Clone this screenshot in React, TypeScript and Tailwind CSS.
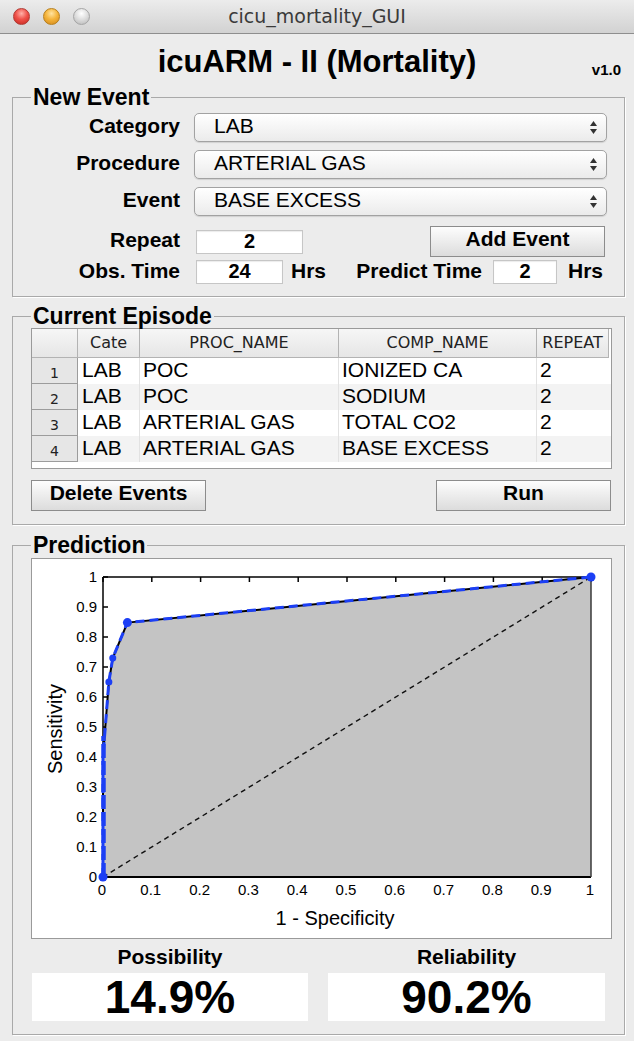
import React from "react";

const X0 = 71;
const W = 488;
const Y0 = 318;
const H = 300;
const fx = (v: number) => X0 + W * v;
const fy = (v: number) => Y0 - H * v;

const curve: [number, number][] = [
  [0, 0],
  [0, 0.1],
  [0, 0.2],
  [0, 0.3],
  [0, 0.4],
  [0.003, 0.465],
  [0.012, 0.65],
  [0.02, 0.73],
  [0.05, 0.848],
  [1, 1],
];

const curveD = curve.map(([x, y], i) => `${i ? "L" : "M"}${fx(x)} ${fy(y)}`).join(" ");
const fillD = `${curveD} L${fx(1)} ${fy(0)} Z`;
const ticks = Array.from({ length: 11 }, (_, i) => i / 10);
const lbl = (v: number) => (v === 0 ? "0" : v === 1 ? "1" : v.toFixed(1));

function Chart() {
  const font = "Liberation Sans, Arial, sans-serif";
  return (
    <svg width="579" height="379" viewBox="0 0 579 379">
      {ticks.map((v) => (
        <g key={v}>
          <line x1={fx(v)} y1={fy(1)} x2={fx(v)} y2={fy(1) + 5} stroke="#000" strokeWidth="1.5" />
          <line x1={fx(0)} y1={fy(v)} x2={fx(0) + 5} y2={fy(v)} stroke="#000" strokeWidth="1.5" />
        </g>
      ))}
      <path d={fillD} fill="#c4c4c4" />
      <line x1={fx(0)} y1={fy(0)} x2={fx(1)} y2={fy(1)} stroke="#111" strokeWidth="1.4" strokeDasharray="5 4" />
      <line x1={fx(0)} y1={fy(1)} x2={fx(1)} y2={fy(1)} stroke="#000" strokeWidth="1.5" />
      <line x1={fx(0)} y1={fy(0)} x2={fx(1)} y2={fy(0)} stroke="#000" strokeWidth="1.8" />
      <line x1={fx(0)} y1={fy(0)} x2={fx(0)} y2={fy(1)} stroke="#000" strokeWidth="1.5" />
      <line x1={fx(1)} y1={fy(0)} x2={fx(1)} y2={fy(1)} stroke="#3a3a3a" strokeWidth="1.5" />
      <path d={curveD} fill="none" stroke="#000" strokeWidth="2" />
      <path d={curveD} fill="none" stroke="#1c3ff5" strokeWidth="3" strokeDasharray="9 5" />
      <line x1={fx(0) + 0.5} y1={fy(0)} x2={fx(0) + 0.5} y2={fy(0.47)} stroke="#1c3ff5" strokeWidth="4.5" strokeDasharray="14 3" />
      <circle cx={fx(0)} cy={fy(0)} r="4.5" fill="#1c3ff5" />
      <circle cx={fx(0.012)} cy={fy(0.65)} r="3.5" fill="#1c3ff5" />
      <circle cx={fx(0.02)} cy={fy(0.73)} r="3.5" fill="#1c3ff5" />
      <circle cx={fx(0.05)} cy={fy(0.848)} r="4.5" fill="#1c3ff5" />
      <circle cx={fx(1)} cy={fy(1)} r="4.5" fill="#1c3ff5" />
      {ticks.map((v) => (
        <text key={`y${v}`} x="65" y={fy(v) + 5} textAnchor="end" fontSize="15" fontFamily={font} fill="#000">
          {lbl(v)}
        </text>
      ))}
      {ticks.map((v) => (
        <text key={`x${v}`} x={fx(v) - 1} y="336" textAnchor="middle" fontSize="15" fontFamily={font} fill="#000">
          {lbl(v)}
        </text>
      ))}
      <text x="303" y="366" textAnchor="middle" fontSize="20" fontFamily={font} fill="#000">
        1 - Specificity
      </text>
      <text transform="translate(30,170) rotate(-90)" textAnchor="middle" fontSize="20" fontFamily={font} fill="#000">
        Sensitivity
      </text>
    </svg>
  );
}

function Arrows() {
  return (
    <svg width="9" height="15" viewBox="0 0 9 15">
      <path d="M4.5 1 L8 6 H1 Z" fill="#333" />
      <path d="M4.5 14 L8 9 H1 Z" fill="#333" />
    </svg>
  );
}

function Select({ value }: { value: string }) {
  return (
    <div className="ml-[14px] flex h-[29px] w-[413px] items-center justify-between rounded-[5px] border border-[#a2a2a2] bg-linear-to-b from-white to-[#ebebeb] pl-[19px] pr-[8px] shadow-[0_1px_1px_rgba(0,0,0,0.12)]">
      <span className="pb-[4px] text-[21px] leading-none text-black">{value}</span>
      <Arrows />
    </div>
  );
}

function Label({ children }: { children: React.ReactNode }) {
  return <div className="w-[167px] shrink-0 pb-[4px] text-right text-[21px] font-bold leading-none text-black">{children}</div>;
}

function Btn({ children, className }: { children: React.ReactNode; className: string }) {
  return (
    <div
      className={`flex h-[31px] w-[175px] shrink-0 items-center justify-center border border-[#8c8c8c] bg-linear-to-b from-[#fdfdfd] to-[#dcdcdc] pb-[6px] text-[21px] font-bold leading-none text-black ${className}`}
    >
      {children}
    </div>
  );
}

function Field({ value, className }: { value: string; className: string }) {
  return (
    <div
      className={`flex h-[24px] shrink-0 items-center justify-center border border-[#c6c6c6] bg-white pb-[2px] text-[20px] font-bold leading-none text-black shadow-[inset_0_1px_1px_rgba(0,0,0,0.08)] ${className}`}
    >
      {value}
    </div>
  );
}

const rows = [
  ["LAB", "POC", "IONIZED CA", "2"],
  ["LAB", "POC", "SODIUM", "2"],
  ["LAB", "ARTERIAL GAS", "TOTAL CO2", "2"],
  ["LAB", "ARTERIAL GAS", "BASE EXCESS", "2"],
];

const fieldset = "ml-[12px] w-[613px] border border-[#a9a9a9] shadow-[1px_1px_0_#ffffff]";
const legend = "ml-[18px] px-[2px] text-[23px] font-bold leading-[24px] text-black";

export default function App() {
  return (
    <div className="flex h-[1041px] w-[634px] flex-col overflow-hidden bg-[#ececec] font-['Liberation_Sans',Arial,sans-serif] text-black">
      {/* Title bar */}
      <div className="grid h-[34px] shrink-0 grid-cols-[1fr_auto_1fr] items-center border-b border-[#8e8e8e] bg-linear-to-b from-[#ececec] to-[#d2d2d2]">
        <div className="flex items-center gap-[13px] pl-[13px]">
          <div className="h-[17px] w-[17px] rounded-full border border-[#b03a33] bg-[radial-gradient(circle_at_50%_30%,#ffb1a8_0%,#f0524a_45%,#c3241c_100%)]" />
          <div className="h-[17px] w-[17px] rounded-full border border-[#b77f1c] bg-[radial-gradient(circle_at_50%_30%,#ffe3a0_0%,#f5b53c_45%,#d1861a_100%)]" />
          <div className="h-[17px] w-[17px] rounded-full border border-[#a5a5a5] bg-[radial-gradient(circle_at_50%_30%,#ffffff_0%,#dcdcdc_50%,#b5b5b5_100%)]" />
        </div>
        <div className="font-['DejaVu_Sans',sans-serif] text-[19px] leading-none text-[#3a3a3a]">cicu_mortality_GUI</div>
        <div />
      </div>

      {/* Header */}
      <div className="grid h-[51px] shrink-0 grid-cols-[1fr_auto_1fr]">
        <div />
        <div className="pt-[10px] text-[31px] font-bold leading-[36px]">icuARM - II (Mortality)</div>
        <div className="justify-self-end pr-[13px] pt-[27px] text-[15px] font-bold leading-[18px]">v1.0</div>
      </div>

      {/* New Event */}
      <fieldset className={`${fieldset} pb-[11px]`}>
        <legend className={legend}>New Event</legend>
        <div className="mt-[4px] flex h-[29px] items-center">
          <Label>Category</Label>
          <Select value="LAB" />
        </div>
        <div className="mt-[8px] flex h-[29px] items-center">
          <Label>Procedure</Label>
          <Select value="ARTERIAL GAS" />
        </div>
        <div className="mt-[8px] flex h-[29px] items-center">
          <Label>Event</Label>
          <Select value="BASE EXCESS" />
        </div>
        <div className="mt-[10px] flex h-[31px] items-center">
          <Label>Repeat</Label>
          <Field value="2" className="ml-[16px] w-[107px]" />
          <Btn className="ml-[127px]">Add Event</Btn>
        </div>
        <div className="mt-[2px] flex h-[26px] items-center">
          <Label>Obs. Time</Label>
          <Field value="24" className="ml-[16px] w-[87px]" />
          <div className="ml-[8px] w-[63px] shrink-0 pb-[4px] text-[21px] font-bold leading-none">Hrs</div>
          <div className="w-[128px] shrink-0 whitespace-nowrap pb-[4px] text-right text-[21px] font-bold leading-none">Predict Time</div>
          <Field value="2" className="ml-[11px] w-[64px]" />
          <div className="ml-[11px] pb-[4px] text-[21px] font-bold leading-none">Hrs</div>
        </div>
      </fieldset>

      {/* Current Episode */}
      <fieldset className={`${fieldset} mt-[7px] pb-[13px]`}>
        <legend className={legend}>Current Episode</legend>
        <div className="ml-[18px] h-[141px] w-[581px] border border-[#9a9a9a] bg-white">
          <div className="grid h-[29px] grid-cols-[46px_62px_199px_198px_72px] font-['DejaVu_Sans',sans-serif] text-[16px] leading-none text-[#222]">
            <div className="border-b border-r border-[#b3b3b3] bg-linear-to-b from-[#f6f6f6] to-[#e6e6e6]" />
            {["Cate", "PROC_NAME", "COMP_NAME", "REPEAT"].map((h) => (
              <div key={h} className="flex items-center justify-center border-b border-r border-[#b3b3b3] bg-linear-to-b from-[#f6f6f6] to-[#e6e6e6]">
                {h}
              </div>
            ))}
          </div>
          {rows.map((r, i) => (
            <div key={i} className={`grid h-[26px] grid-cols-[46px_62px_199px_198px_72px] ${i % 2 ? "bg-[#f3f3f3]" : "bg-white"}`}>
              <div className="flex items-center justify-center border-b border-r border-[#9c9c9c] bg-[#e6e6e6] pt-[4px] font-['DejaVu_Sans',sans-serif] text-[14px] leading-none text-[#222]">
                {i + 1}
              </div>
              {r.map((c, j) => (
                <div key={j} className={`flex items-center pb-[3px] text-[21px] leading-none ${j === 0 ? "pl-[4px]" : "pl-[3px]"} ${j < 3 ? "border-r border-[#e2e2e2]" : ""}`}>
                  {c}
                </div>
              ))}
            </div>
          ))}
        </div>
        <div className="mt-[11px] flex">
          <Btn className="ml-[18px]">Delete Events</Btn>
          <Btn className="ml-[230px]">Run</Btn>
        </div>
      </fieldset>

      {/* Prediction */}
      <fieldset className={`${fieldset} mt-[8px] pb-[13px]`}>
        <legend className={legend}>Prediction</legend>
        <div className="ml-[18px] mt-[1px] h-[381px] w-[581px] border border-[#9a9a9a] bg-white">
          <Chart />
        </div>
        <div className="mt-[6px] flex">
          <div className="ml-[19px] flex w-[276px] flex-col items-center">
            <div className="text-[21px] font-bold leading-[24px]">Possibility</div>
            <div className="mt-[4px] flex h-[48px] w-full items-center justify-center bg-white text-[46px] font-bold leading-none">14.9%</div>
          </div>
          <div className="ml-[20px] flex w-[277px] flex-col items-center">
            <div className="text-[21px] font-bold leading-[24px]">Reliability</div>
            <div className="mt-[4px] flex h-[48px] w-full items-center justify-center bg-white text-[46px] font-bold leading-none">90.2%</div>
          </div>
        </div>
      </fieldset>
    </div>
  );
}
